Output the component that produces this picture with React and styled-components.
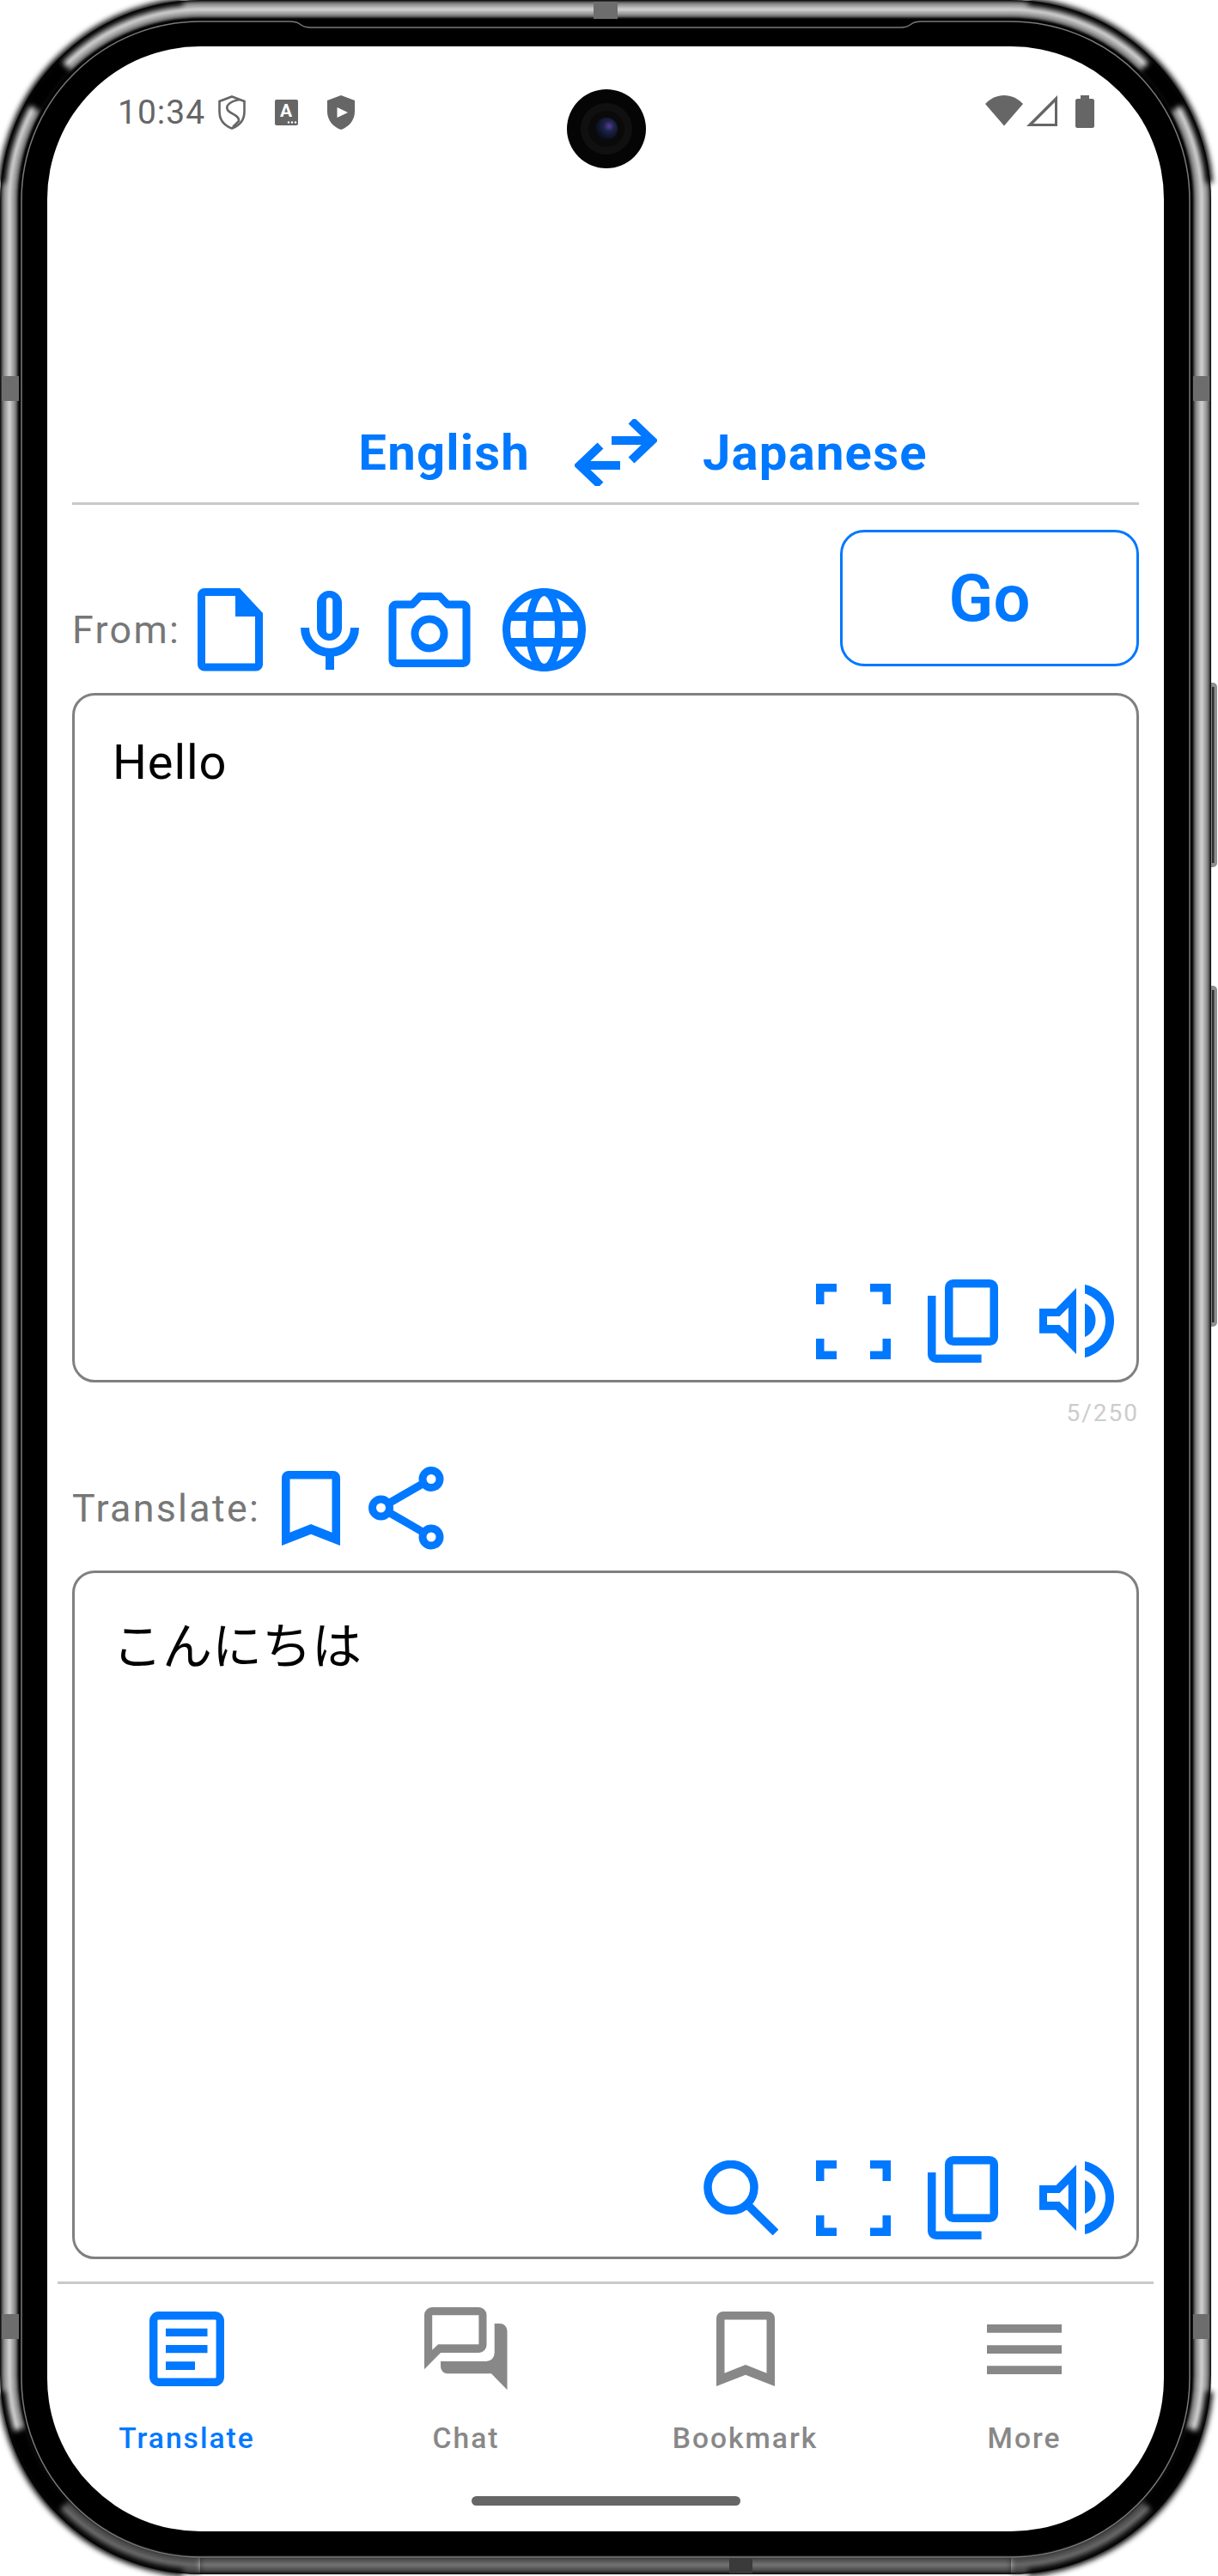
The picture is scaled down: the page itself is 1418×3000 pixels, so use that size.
import React from "react";
import styled, { createGlobalStyle } from "styled-components";

const BLUE = "#0078ff";
const GREY = "#888888";
const STATUS = "#666666";

const Global = createGlobalStyle`
  html, body { margin: 0; padding: 0; background: #fff; }
  * { box-sizing: border-box; }
  body { font-family: Roboto, "Noto Sans CJK JP", sans-serif; }
`;

const Page = styled.div`
  width: 1418px;
  height: 3000px;
  position: relative;
  overflow: hidden;
  background: #fff;
`;
const Phone = styled.div`
  position: relative;
  width: 1410px;
  height: 2998px;
  padding: 54px 55px 50px;
`;
const FrameArt = styled.svg`
  position: absolute;
  left: 0;
  top: 0;
  width: 1418px;
  height: 3000px;
`;
const Screen = styled.main`
  position: relative;
  width: 1300px;
  height: 2894px;
  background: #fff;
  border-radius: 178px;
  overflow: hidden;
  display: flex;
  flex-direction: column;
`;
const Camera = styled.svg`
  position: absolute;
  left: 605px;
  top: 50px;
  width: 92px;
  height: 92px;
`;
const StatusBar = styled.header`
  display: flex;
  justify-content: space-between;
  align-items: flex-start;
  height: 40px;
  margin-top: 57px;
  padding: 0 81px 0 82px;
`;
const StatusGroup = styled.div`
  display: flex;
  align-items: ${(p) => p.$align || "center"};
  height: 40px;
`;
const Time = styled.span`
  font-size: 39px;
  line-height: 40px;
  letter-spacing: 1px;
  color: ${STATUS};
`;
const Content = styled.section`
  display: flex;
  flex-direction: column;
  padding: 0 29px;
`;
const LangBar = styled.div`
  display: flex;
  align-items: center;
  justify-content: center;
  height: 78px;
  margin-top: 337px;
  padding-left: 87px;
`;
const LangName = styled.span`
  margin-left: ${(p) => p.$ml || 0}px;
  font-size: 58px;
  line-height: 66px;
  font-weight: 700;
  letter-spacing: 1.2px;
  color: ${BLUE};
`;
const Divider = styled.hr`
  border: 0;
  height: 3px;
  margin: ${(p) => p.$margin};
  background: #c9c9c9;
  flex: none;
`;
const ToolRow = styled.div`
  display: flex;
  justify-content: space-between;
  height: ${(p) => p.$height}px;
  margin-top: ${(p) => p.$top}px;
`;
const ToolGroup = styled.div`
  display: flex;
  align-items: center;
  align-self: flex-end;
  height: 97px;
`;
const ToolLabel = styled.span`
  font-size: 44.8px;
  line-height: 52px;
  color: #777;
  letter-spacing: 2.3px;
`;
const GoButton = styled.button`
  width: 348px;
  height: 159px;
  border: 3px solid ${BLUE};
  border-radius: 28px;
  background: #fff;
  color: ${BLUE};
  font-family: Roboto, sans-serif;
  font-size: 76px;
  font-weight: 600;
  padding: 0;
`;
const TextBox = styled.div`
  display: flex;
  flex-direction: column;
  justify-content: space-between;
  height: ${(p) => p.$height}px;
  margin-top: ${(p) => p.$top}px;
  padding: ${(p) => p.$pt}px 26px 20px 44px;
  border: 3px solid #808080;
  border-radius: 26px;
`;
const BoxText = styled.div`
  font-size: ${(p) => p.$size || 56}px;
  line-height: 66px;
  letter-spacing: ${(p) => p.$spacing || 0}px;
  color: #000;
  font-weight: 400;
`;
const BoxActions = styled.div`
  display: flex;
  justify-content: flex-end;
  align-items: center;
  height: 97px;
`;
const Counter = styled.div`
  margin-top: 22px;
  height: 28px;
  line-height: 28px;
  font-size: 28px;
  text-align: right;
  color: #ccc;
  letter-spacing: 2px;
`;
const Nav = styled.nav`
  display: grid;
  grid-template-columns: repeat(4, 1fr);
  margin-top: 27px;
`;
const NavItem = styled.div`
  display: flex;
  flex-direction: column;
  align-items: center;
  color: ${(p) => (p.$active ? BLUE : GREY)};
`;
const NavIconSlot = styled.div`
  display: flex;
  align-items: center;
  justify-content: center;
  height: 97px;
`;
const NavLabel = styled.span`
  margin-top: 36px;
  font-size: 33.6px;
  line-height: 40px;
  font-weight: 500;
  letter-spacing: 2px;
`;
const HomeBar = styled.div`
  width: 313px;
  height: 11px;
  margin: 47px auto 0;
  border-radius: 6px;
  background: #666;
`;

const Glyph = styled.svg`
  display: block;
  flex: none;
  width: ${(p) => p.$w}px;
  height: ${(p) => p.$h}px;
  margin-left: ${(p) => p.$ml || 0}px;
  color: ${(p) => p.$color || "inherit"};
`;

const Icon = ({ w, h, ml, color = BLUE, children }) => (
  <Glyph $w={w} $h={h} $ml={ml} $color={color} viewBox={`0 0 ${w} ${h}`} aria-hidden="true">
    {children}
  </Glyph>
);

const FileIcon = (p) => (
  <Icon w={76} h={97} {...p}>
    <path fill="currentColor" fillRule="evenodd" d="M8 0H49L76 29V88a8 8 0 0 1-8 8.5H8a8 8 0 0 1-8-8V8a8 8 0 0 1 8-8ZM9 9V87.5H67V33H44V9Z" />
  </Icon>
);
const MicIcon = (p) => (
  <Icon w={68} h={92} {...p}>
    <path fill="currentColor" fillRule="evenodd" d="M33.5 0A14.5 14.5 0 0 1 48 14.5V43.500A14.500 14.500 0 0 1 19 43.500V14.500A14.500 14.500 0 0 1 33.500 0ZM33.500 8A3.700 3.700 0 0 0 29.800 11.700V46.300A3.700 3.700 0 0 0 37.200 46.300V11.700A3.700 3.700 0 0 0 33.500 8Z" />
    <path fill="none" stroke="currentColor" strokeWidth="10" d="M5 43a29 29 0 0 0 58 0M34 72V92" />
  </Icon>
);
const CameraIcon = (p) => (
  <Icon w={96} h={87} {...p}>
    <path fill="none" stroke="currentColor" strokeWidth="9" strokeLinejoin="round" d="M9 14H28L37 4.500H60L69 14H87a4 4 0 0 1 4 4V78a4 4 0 0 1-4 4.500H9a4 4 0 0 1-4-4.500V18a4 4 0 0 1 4-4Z" />
    <circle cx="48" cy="48" r="17" fill="none" stroke="currentColor" strokeWidth="9" />
  </Icon>
);
const GlobeIcon = (p) => (
  <Icon w={97} h={97} {...p}>
    <g fill="none" stroke="currentColor" strokeWidth="9">
      <circle cx="48.500" cy="48.500" r="44" />
      <ellipse cx="48.500" cy="48.500" rx="17" ry="44" />
      <path strokeWidth="10" d="M7 33H90M7 63H90" />
    </g>
  </Icon>
);
const SwapIcon = (p) => (
  <Icon w={96} h={78} {...p}>
    <g fill="none" stroke="currentColor" strokeWidth="10">
      <path d="M43 25H90M66 2L90 25L66 48" />
      <path d="M53 54H6M30 31L6 54L30 77" />
    </g>
  </Icon>
);
const FullscreenIcon = (p) => (
  <Icon w={87} h={88} {...p}>
    <path fill="none" stroke="currentColor" strokeWidth="9.500" d="M4.750 24V4.750H24M63 4.750H82.250V24M4.750 64V83.250H24M63 83.250H82.250V64" />
  </Icon>
);
const CopyIcon = (p) => (
  <Icon w={82} h={97} {...p}>
    <g fill="none" stroke="currentColor" strokeWidth="9.500">
      <rect x="24.750" y="4.750" width="52.500" height="67.500" rx="5" />
      <path d="M4.750 19V87a5 5 0 0 0 5 5.250H62.600" />
    </g>
  </Icon>
);
const SpeakerIcon = (p) => (
  <Icon w={87} h={85} {...p}>
    <path fill="currentColor" fillRule="evenodd" d="M0 28H19.500L43 4V81L19.500 56.700H0ZM9 37V47H23.600L33.800 57V26.700L23.600 37Z" />
    <path fill="currentColor" d="M53 22C60 25 65.500 32 65.500 41.500C65.500 51 60 58 53 61Z" />
    <path fill="currentColor" d="M53 0C72 4 87 21 87 42C87 64 72 80 53 85V74C67 70 77 57 77 42C77 28 67 15 53 10.500Z" />
  </Icon>
);
const BookmarkIcon = (p) => (
  <Icon w={68} h={87} {...p}>
    <path fill="currentColor" fillRule="evenodd" d="M8 0H60a8 8 0 0 1 8 8V87L34 73.700L0 87V8a8 8 0 0 1 8-8ZM9.500 9.500V71.700L34 62L58.500 71.700V9.500Z" />
  </Icon>
);
const ShareIcon = (p) => (
  <Icon w={88} h={97} {...p}>
    <g fill="none" stroke="currentColor" strokeWidth="9">
      <path d="M24 42.500L63 20M24 53.500L63 76" />
      <circle cx="73" cy="14.500" r="10" />
      <circle cx="14.500" cy="48" r="10" />
      <circle cx="73" cy="82" r="10" />
    </g>
  </Icon>
);
const SearchIcon = (p) => (
  <Icon w={87} h={87} {...p}>
    <g fill="none" stroke="currentColor" strokeWidth="9.500">
      <circle cx="32" cy="31.500" r="27" />
      <path d="M50 50.500L84 84" />
    </g>
  </Icon>
);
const DocIcon = (p) => (
  <Icon w={87} h={87} {...p}>
    <rect x="4.700" y="4.700" width="77.600" height="77.600" rx="6" fill="none" stroke="currentColor" strokeWidth="9.400" />
    <path fill="currentColor" d="M19 19.700H67.500V29H19ZM19 39H67.500V48.300H19ZM19 58.300H53V68H19Z" />
  </Icon>
);
const ChatIcon = (p) => (
  <Icon w={97} h={97} {...p}>
    <path fill="currentColor" fillRule="evenodd" d="M9 0H63.500a9 9 0 0 1 9 9V44a9 9 0 0 1-9 9H19L0 72.300V9a9 9 0 0 1 9-9ZM9.200 9.300V49.700L16 43.300H63.400V9.300Z" />
    <path fill="currentColor" d="M81.700 19H88a8.500 8.500 0 0 1 8.500 8.500V96.300L78 77.300H27a8 8 0 0 1-8-8V63H72a9.700 9.700 0 0 0 9.700-9.700Z" />
  </Icon>
);
const MenuIcon = (p) => (
  <Icon w={87} h={58} {...p}>
    <path fill="currentColor" d="M0 0H87V9.700H0ZM0 24.300H87V34H0ZM0 48.300H87V58H0Z" />
  </Icon>
);

const ShieldOutline = (p) => (
  <Icon w={32} h={40} color={STATUS} {...p}>
    <g fill="none" stroke="currentColor" strokeWidth="2.600">
      <path d="M16 1.500L30.500 7V19C30.500 29 24 35.500 16 38.500C8 35.500 1.500 29 1.500 19V7Z" />
      <path d="M25 5C14 7 8 12 11 17C14 22 25 23 24 30L17 37" />
    </g>
  </Icon>
);
const LetterChip = styled.text`
  font-family: Roboto, sans-serif;
  font-size: 21px;
  font-weight: 700;
  fill: #fff;
`;
const TranslateChip = (p) => (
  <Icon w={27} h={30} color={STATUS} {...p}>
    <rect width="27" height="30" rx="2" fill="currentColor" />
    <LetterChip x="6" y="20">A</LetterChip>
    <g fill="#fff">
      <circle cx="16" cy="26.500" r="1.200" />
      <circle cx="20" cy="26.500" r="1.200" />
      <circle cx="24" cy="26.500" r="1.200" />
    </g>
  </Icon>
);
const ShieldPlay = (p) => (
  <Icon w={32} h={40} color={STATUS} {...p}>
    <path fill="currentColor" fillRule="evenodd" d="M16 0L32 6V19C32 29 25 37 16 40C7 37 0 29 0 19V6ZM11.500 14V26L24 20Z" />
  </Icon>
);
const WifiIcon = (p) => (
  <Icon w={44} h={36} color={STATUS} {...p}>
    <path fill="currentColor" d="M22 35.500L0 10C6 3.500 14 0 22 0C30 0 38 3.500 44 10Z" />
  </Icon>
);
const SignalIcon = (p) => (
  <Icon w={36} h={36} color={STATUS} {...p}>
    <path fill="currentColor" fillRule="evenodd" d="M36 0V36H0ZM33 8L8 33H33Z" />
  </Icon>
);
const BatteryIcon = (p) => (
  <Icon w={22} h={38} color={STATUS} {...p}>
    <path fill="currentColor" d="M6 0H16V4H19.500a2.500 2.500 0 0 1 2.500 2.500V35.500a2.500 2.500 0 0 1-2.500 2.500H2.500a2.500 2.500 0 0 1-2.500-2.500V6.500a2.500 2.500 0 0 1 2.500-2.500H6Z" />
  </Icon>
);

/* Arc along a corner of the metal band: angles in degrees, 0 = side, 90 = top/bottom */
const W = 1410;
const H = 2998;
const cornerArc = (corner, a0, a1, r = 222) => {
  const c = 233;
  const pt = (a) => {
    const t = (a * Math.PI) / 180;
    const x = c - r * Math.cos(t);
    const y = c - r * Math.sin(t);
    return [corner.includes("r") ? W - x : x, corner.includes("b") ? H - y : y];
  };
  const [x0, y0] = pt(a0);
  const [x1, y1] = pt(a1);
  const flip = corner === "tl" || corner === "br";
  return `M${x0} ${y0}A${r} ${r} 0 0 ${flip ? 1 : 0} ${x1} ${y1}`;
};

const bandRect = { x: 11, y: 11, width: W - 22, height: H - 22, rx: 222, fill: "none" };

const Frame = () => (
  <FrameArt viewBox="0 0 1418 3000" aria-hidden="true">
    <defs>
      <filter id="soft" x="-5%" y="-5%" width="110%" height="110%">
        <feGaussianBlur stdDeviation="1.200" />
      </filter>
      <filter id="fade" x="-30%" y="-30%" width="160%" height="160%">
        <feGaussianBlur stdDeviation="3" />
      </filter>
    </defs>
    <g>
      <rect x="1404" y="795" width="13" height="215" rx="5" fill="#8f8f8f" />
      <rect x="1404" y="1148" width="13" height="397" rx="5" fill="#8f8f8f" />
      <rect x="1411" y="800" width="2.500" height="205" fill="#2e2e2e" />
      <rect x="1411" y="1153" width="2.500" height="387" fill="#2e2e2e" />
    </g>
    <rect width={W} height={H} rx="233" fill="#000" />
    <g filter="url(#soft)">
      <rect {...bandRect} stroke="#333" strokeWidth="20" />
      <rect {...bandRect} stroke="#7c7c7c" strokeWidth="17" />
      <rect {...bandRect} stroke="#a8a8a8" strokeWidth="11" />
      <rect {...bandRect} stroke="#cdcdcd" strokeWidth="4" />
    </g>
    <path d={`M233 ${H - 11}H${W - 233}`} stroke="#000" strokeOpacity="0.45" strokeWidth="20" />
    <g fill="none" stroke="#030303" filter="url(#fade)">
      {["tl", "tr"].map((c) => (
        <g key={c}>
          <path d={cornerArc(c, 29, 45)} strokeWidth="26" />
          <path d={cornerArc(c, 5, 85, 232)} strokeWidth="8" />
        </g>
      ))}
      {["bl", "br"].map((c) => (
        <g key={c}>
          <path d={cornerArc(c, 17, 44)} strokeWidth="26" />
          <path d={cornerArc(c, 44, 90)} strokeWidth="22" strokeOpacity="0.5" />
          <path d={cornerArc(c, 5, 85, 232)} strokeWidth="8" />
        </g>
      ))}
    </g>
    <g fill="#6d6d6d">
      <rect x="2" y="438" width="20" height="29" />
      <rect x="2" y="2695" width="20" height="29" />
      <rect x="1389" y="438" width="19" height="29" />
      <rect x="1389" y="2695" width="19" height="29" />
      <rect x="691" y="2" width="28" height="20" />
      <rect x="849" y="2979" width="27" height="18" fill="#3a3a3a" />
    </g>
    <path
      fill="none"
      stroke="#7a7a7a"
      strokeWidth="1.500"
      d="M25 233A208 208 0 0 1 233 25H337Q345 25 349 28Q354 32 362 32H1048Q1056 32 1061 28Q1065 25 1073 25H1177A208 208 0 0 1 1385 233V2770A208 208 0 0 1 1177 2978H233A208 208 0 0 1 25 2770Z"
    />
  </FrameArt>
);

const Lens = () => (
  <Camera viewBox="0 0 92 92" aria-hidden="true">
    <defs>
      <radialGradient id="lensGlass" cx="62%" cy="38%" r="70%">
        <stop offset="0%" stopColor="#5a3a9a" />
        <stop offset="35%" stopColor="#1c2346" />
        <stop offset="100%" stopColor="#05070f" />
      </radialGradient>
    </defs>
    <circle cx="46" cy="46" r="46" fill="#050505" />
    <circle cx="46" cy="46" r="30" fill="#101010" />
    <circle cx="46" cy="46" r="21" fill="#0a0a0a" />
    <circle cx="46" cy="46" r="13" fill="url(#lensGlass)" />
  </Camera>
);

export default function App() {
  return (
    <Page>
      <Global />
      <Phone>
        <Frame />
        <Screen>
          <Lens />
          <StatusBar>
            <StatusGroup>
              <Time>10:34</Time>
              <ShieldOutline ml={15} />
              <TranslateChip ml={34} />
              <ShieldPlay ml={34} />
            </StatusGroup>
            <StatusGroup $align="flex-start">
              <WifiIcon />
              <SignalIcon ml={4} />
              <BatteryIcon ml={21} />
            </StatusGroup>
          </StatusBar>
          <Content>
            <LangBar>
              <LangName>English</LangName>
              <SwapIcon ml={52} />
              <LangName $ml={53}>Japanese</LangName>
            </LangBar>
            <Divider $margin="19px 0 0" />
            <ToolRow $height={165} $top={29}>
              <ToolGroup>
                <ToolLabel>From:</ToolLabel>
                <FileIcon ml={20} />
                <MicIcon ml={44} />
                <CameraIcon ml={34} />
                <GlobeIcon ml={37} />
              </ToolGroup>
              <GoButton>Go</GoButton>
            </ToolRow>
            <TextBox $height={803} $top={25} $pt={45}>
              <BoxText $spacing={0.9}>Hello</BoxText>
              <BoxActions>
                <FullscreenIcon />
                <CopyIcon ml={43} />
                <SpeakerIcon ml={48} />
              </BoxActions>
            </TextBox>
            <Counter>5/250</Counter>
            <ToolRow $height={97} $top={48}>
              <ToolGroup>
                <ToolLabel>Translate:</ToolLabel>
                <BookmarkIcon ml={25} />
                <ShareIcon ml={33} />
              </ToolGroup>
            </ToolRow>
            <TextBox $height={802} $top={24} $pt={53}>
              <BoxText $size={58}>こんにちは</BoxText>
              <BoxActions>
                <SearchIcon />
                <FullscreenIcon ml={44} />
                <CopyIcon ml={43} />
                <SpeakerIcon ml={48} />
              </BoxActions>
            </TextBox>
          </Content>
          <Divider $margin="26px 12px 0" />
          <Nav>
            <NavItem $active>
              <NavIconSlot><DocIcon color={BLUE} /></NavIconSlot>
              <NavLabel>Translate</NavLabel>
            </NavItem>
            <NavItem>
              <NavIconSlot><ChatIcon color={GREY} /></NavIconSlot>
              <NavLabel>Chat</NavLabel>
            </NavItem>
            <NavItem>
              <NavIconSlot><BookmarkIcon color={GREY} /></NavIconSlot>
              <NavLabel>Bookmark</NavLabel>
            </NavItem>
            <NavItem>
              <NavIconSlot><MenuIcon color={GREY} /></NavIconSlot>
              <NavLabel>More</NavLabel>
            </NavItem>
          </Nav>
          <HomeBar />
        </Screen>
      </Phone>
    </Page>
  );
}
